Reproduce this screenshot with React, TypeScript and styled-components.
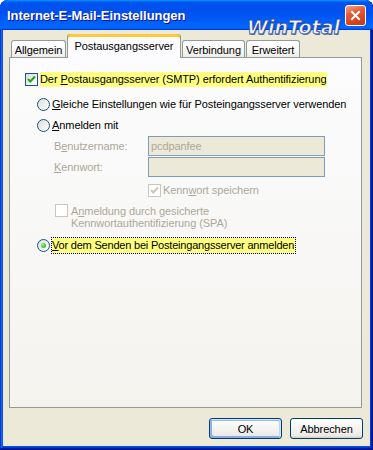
import React from "react";
import styled, { createGlobalStyle, css } from "styled-components";

const Global = createGlobalStyle`
  html, body { margin: 0; padding: 0; background: #ffffff; }
  body { font-family: "Liberation Sans", Arial, sans-serif; font-size: 11px; letter-spacing: -0.08px; }
`;

const Window = styled.div`
  position: relative;
  width: 373px;
  height: 450px;
  display: flex;
  flex-direction: column;
  border-radius: 8px 8px 0 0;
  background: #0055e5;
  box-shadow: inset -1px -1px #00138c, inset 1px 1px #0831d9, inset -2px -2px #001ea0,
    inset 2px 2px #166aee, inset -3px -3px #003bda, inset 3px 3px #0855dd;
  overflow: hidden;
`;

const TitleBar = styled.div`
  height: 30px;
  flex: none;
  display: flex;
  align-items: center;
  padding: 0 7px 0 7px;
  border-radius: 8px 8px 0 0;
  background: linear-gradient(180deg, #0997ff, #0053ee 8%, #0050ee 40%, #06f 88%, #06f 93%, #005bff 95%, #003dd7 96%, #003dd7);
`;

const Title = styled.div`
  font-family: "Liberation Sans", Arial, sans-serif;
  font-weight: bold;
  font-size: 13px;
  color: #ffffff;
  text-shadow: 1px 1px #0f1089;
  letter-spacing: -0.05px;
  padding-top: 1px;
`;

const CloseButton = styled.div`
  margin-left: auto;
  width: 21px;
  height: 21px;
  box-sizing: border-box;
  border: 1px solid #ffffff;
  border-radius: 3px;
  background: linear-gradient(160deg, #f2a48a 0%, #e65c3c 35%, #d9431f 70%, #c23a14 100%);
  display: flex;
  align-items: center;
  justify-content: center;
`;

const Logo = styled.div`
  position: absolute;
  left: 247px;
  top: 16px;
  font-family: "DejaVu Sans", Verdana, sans-serif;
  font-weight: bold;
  font-style: italic;
  font-size: 19px;
  letter-spacing: 0px;
  color: #eef4ff;
  -webkit-text-stroke: 0.8px #2a4fa8;
  text-shadow: 1px 1px 0 rgba(10, 30, 90, 0.55);
  pointer-events: none;
`;

const Frame = styled.div`
  flex: 1;
  margin: 0 3px 4px 3px;
  background: #ece9d8;
  display: flex;
  flex-direction: column;
  padding: 4px 8px 0 6px;
`;

const TabStrip = styled.div`
  height: 23px;
  display: flex;
  align-items: flex-end;
  padding-left: 2px;
  position: relative;
  z-index: 2;
`;

const Tab = styled.div<{ $active?: boolean; $w: number }>`
  box-sizing: border-box;
  width: ${(p) => p.$w}px;
  height: 17px;
  margin-right: 1px;
  border: 1px solid #919b9c;
  border-bottom: none;
  border-radius: 3px 3px 0 0;
  background: linear-gradient(180deg, #ffffff 0%, #fcfcfe 30%, #f4f3ee 80%, #ecebe5 100%);
  display: flex;
  align-items: center;
  justify-content: center;
  padding-top: 1px;
  color: #000;
  white-space: nowrap;
  ${(p) =>
    p.$active &&
    css`
      height: 24px;
      margin-bottom: -1px;
      background: #fcfcfe;
      border-top: none;
      box-shadow: inset 0 3px 0 0 #ffc73c, inset 0 1px 0 0 #e68b2c;
      border-radius: 3px 3px 0 0;
      padding-top: 0px;
      align-items: center;
    `}
`;

const Panel = styled.div`
  box-sizing: border-box;
  height: 351px;
  border: 1px solid #919b9c;
  background: linear-gradient(180deg, #fcfcfe 0%, #f4f3ee 100%);
  display: flex;
  flex-direction: column;
  padding: 14px 0 0 15px;
`;

const Row = styled.div<{ $h?: number; $mt?: number; $ml?: number }>`
  display: flex;
  align-items: center;
  height: ${(p) => p.$h ?? 15}px;
  margin-top: ${(p) => p.$mt ?? 0}px;
  margin-left: ${(p) => p.$ml ?? 0}px;
  white-space: nowrap;
`;

const TopRow = styled.div<{ $mt?: number; $ml?: number }>`
  display: flex;
  align-items: flex-start;
  margin-top: ${(p) => p.$mt ?? 0}px;
  margin-left: ${(p) => p.$ml ?? 0}px;
`;

const Label = styled.span<{ $disabled?: boolean; $gap?: number }>`
  margin-left: ${(p) => p.$gap ?? 2}px;
  color: ${(p) => (p.$disabled ? "#aca899" : "#000000")};
  line-height: 13px;
`;

const Highlight = styled.span<{ $focus?: boolean; $gap?: number }>`
  margin-left: ${(p) => p.$gap ?? 2}px;
  background: #ffff80;
  padding: 1px 1px 1px 0;
  line-height: 13px;
  color: #000;
  ${(p) =>
    p.$focus &&
    css`
      outline: 1px dotted #000;
      outline-offset: 0px;
      letter-spacing: -0.2px;
    `}
`;

const Multi = styled.span<{ $disabled?: boolean }>`
  margin-left: 3px;
  margin-top: 1px;
  line-height: 12px;
  color: ${(p) => (p.$disabled ? "#aca899" : "#000")};
`;

const U = styled.u`
  text-decoration: underline;
  text-underline-offset: 1px;
`;

const Box = styled.span<{ $disabled?: boolean }>`
  box-sizing: border-box;
  width: 13px;
  height: 13px;
  flex: none;
  border: 1px solid ${(p) => (p.$disabled ? "#cac8bb" : "#1c5180")};
  background: ${(p) => (p.$disabled ? "#ffffff" : "linear-gradient(135deg, #dcdcd7 0%, #ffffff 100%)")};
  display: flex;
  align-items: center;
  justify-content: center;
`;

const Radio = styled.span<{ $checked?: boolean }>`
  box-sizing: border-box;
  width: 13px;
  height: 13px;
  flex: none;
  border-radius: 50%;
  border: 1px solid #1c5180;
  background: linear-gradient(135deg, #dcdcd7 0%, #ffffff 100%);
  display: flex;
  align-items: center;
  justify-content: center;
  ${(p) =>
    p.$checked &&
    css`
      &::after {
        content: "";
        width: 5px;
        height: 5px;
        border-radius: 50%;
        background: radial-gradient(circle at 35% 35%, #a0f09a 0%, #55d64f 40%, #21a121 100%);
      }
    `}
`;

const FieldLabel = styled.span`
  width: 94px;
  color: #aca899;
`;

const Input = styled.div`
  box-sizing: border-box;
  width: 177px;
  height: 20px;
  border: 1px solid #7f9db9;
  background: #ece9d8;
  color: #aca899;
  display: flex;
  align-items: center;
  padding-left: 2px;
`;

const ButtonRow = styled.div`
  display: flex;
  justify-content: flex-end;
  gap: 8px;
  margin-top: 10px;
  margin-right: -1px;
`;

const Button = styled.div<{ $default?: boolean }>`
  box-sizing: border-box;
  width: 73px;
  height: 21px;
  border: 1px solid #003c74;
  border-radius: 3px;
  background: linear-gradient(180deg, #ffffff, #ecebe6 86%, #d6d0c5);
  display: flex;
  align-items: center;
  justify-content: center;
  color: #000;
  ${(p) =>
    p.$default &&
    css`
      box-shadow: inset -1px 1px #cee7ff, inset 1px 2px #98b8ea, inset -2px 2px #bcd4f6,
        inset 1px -1px #89ade4, inset 2px -2px #89ade4;
    `}
`;

const Check = ({ color }: { color: string }) => (
  <svg width="11" height="11" viewBox="0 0 11 11">
    <polyline points="2,5 4.3,7.5 9,2.5" fill="none" stroke={color} strokeWidth="2" />
  </svg>
);

export default function App() {
  return (
    <>
      <Global />
      <Window>
        <TitleBar>
          <Title>Internet-E-Mail-Einstellungen</Title>
          <CloseButton>
            <svg width="13" height="13" viewBox="0 0 13 13">
              <path d="M3 3 L10 10 M10 3 L3 10" stroke="#ffffff" strokeWidth="2" strokeLinecap="square" />
            </svg>
          </CloseButton>
        </TitleBar>
        <Logo>WinTotal</Logo>
        <Frame>
          <TabStrip>
            <Tab $w={55}>Allgemein</Tab>
            <Tab $w={114} $active>
              Postausgangsserver
            </Tab>
            <Tab $w={63}>Verbindung</Tab>
            <Tab $w={54}>Erweitert</Tab>
          </TabStrip>
          <Panel>
            <Row $h={15}>
              <Box>
                <Check color="#21a121" />
              </Box>
              <Highlight>
                Der <U>P</U>ostausgangsserver (SMTP) erfordert Authentifizierung
              </Highlight>
            </Row>
            <Row $mt={10} $ml={12}>
              <Radio />
              <Label>
                <U>G</U>leiche Einstellungen wie für Posteingangsserver verwenden
              </Label>
            </Row>
            <Row $mt={6} $ml={12}>
              <Radio />
              <Label>
                <U>A</U>nmelden mit
              </Label>
            </Row>
            <Row $h={20} $mt={3} $ml={29}>
              <FieldLabel>
                B<U>e</U>nutzername:
              </FieldLabel>
              <Input>pcdpanfee</Input>
            </Row>
            <Row $h={20} $mt={1} $ml={29}>
              <FieldLabel>
                <U>K</U>ennwort:
              </FieldLabel>
              <Input />
            </Row>
            <Row $h={14} $mt={6} $ml={123}>
              <Box $disabled>
                <Check color="#cac8bb" />
              </Box>
              <Label $disabled>
                Kenn<U>w</U>ort speichern
              </Label>
            </Row>
            <TopRow $mt={7} $ml={30}>
              <Box $disabled />
              <Multi $disabled>
                A<U>n</U>meldung durch gesicherte
                <br />
                Kennwortauthentifizierung (SPA)
              </Multi>
            </TopRow>
            <Row $mt={9} $ml={12}>
              <Radio $checked />
              <Highlight $focus>
                <U>V</U>or dem Senden bei Posteingangsserver anmelden
              </Highlight>
            </Row>
          </Panel>
          <ButtonRow>
            <Button $default>OK</Button>
            <Button>Abbrechen</Button>
          </ButtonRow>
        </Frame>
      </Window>
    </>
  );
}
